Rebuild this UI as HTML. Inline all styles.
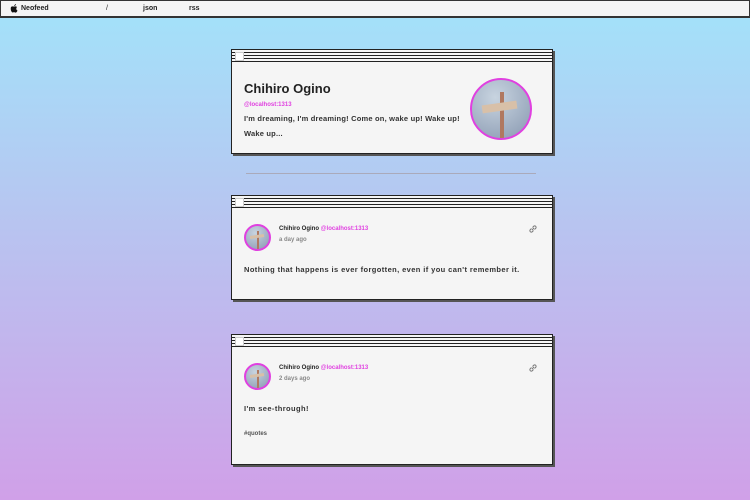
<!DOCTYPE html>
<html><head><style>
*{margin:0;padding:0;box-sizing:border-box}
body{width:750px;height:500px;overflow:hidden;background:linear-gradient(#a2e3fa 0%,#b8c4f0 45%,#d0a0e8 100%);font-family:"Liberation Sans",sans-serif;position:relative;color:#222}
.top{position:absolute;left:0;top:0;width:750px;height:18px;background:#f4f4f4;border:1px solid #333;border-bottom:2px solid #333;font-size:7px;font-weight:bold}
.top span{position:absolute;top:4px}
.card{position:absolute;left:231px;width:322px;background:#f5f5f5;border:1px solid #222;box-shadow:2px 2px 0 #555}
.bar{height:12px;border-bottom:1px solid #222;background:repeating-linear-gradient(#f5f5f5 0 2px,#222 2px 3px);position:relative}
.bar:after{content:"";position:absolute;left:3px;top:2px;width:7px;height:7px;background:#fff;border:1px solid #ccc}
.av{position:absolute;border-radius:50%;border:2px solid #e040e0;background:radial-gradient(circle at 40% 30%,#c8d4e0,#8898b0);overflow:hidden}
.av:before{content:"";position:absolute;left:48%;top:20%;width:8%;height:80%;background:#b07860}
.av:after{content:"";position:absolute;left:18%;top:40%;width:60%;height:13%;background:#d8c0a8;transform:rotate(-8deg)}
.mg{color:#e040e0}
.link{position:absolute;right:14px;top:28px;width:10px;height:10px}
.t{letter-spacing:.4px}
</style></head><body>
<div class="top"><svg style="position:absolute;left:9px;top:3px" width="8" height="9" viewBox="0 0 8 9"><path d="M4 2C5 0 6 0 6 0C6 1 5 2 4 2ZM1 3C2 2 3 2.5 4 2.5C5 2.5 6 2 7 3C6 4 6 6 7.5 6.5C7 8 6 9 5 8.5C4 8 4 8 3 8.5C2 9 0 6 1 3Z" fill="#111"/></svg><span style="left:20px">Neofeed</span><span style="left:105px;font-weight:normal">/</span><span style="left:142px">json</span><span style="left:188px">rss</span></div>

<div class="card" style="top:49px;height:105px">
<div class="bar"></div>
<div style="position:absolute;left:12px;top:31px;font-size:13px;font-weight:bold">Chihiro Ogino</div>
<div class="mg" style="position:absolute;left:12px;top:52px;font-size:6px;font-weight:bold">@localhost:1313</div>
<div style="position:absolute;left:12px;top:61px;font-size:7.5px;font-weight:bold;line-height:15px;width:222px;color:#333;letter-spacing:.2px">I'm dreaming, I'm dreaming! Come on, wake up! Wake up! Wake up...</div>
<div class="av" style="left:238px;top:28px;width:62px;height:62px"></div>
</div>

<div style="position:absolute;left:246px;top:173px;width:290px;height:1px;background:#aab"></div>

<div class="card" style="top:195px;height:105px">
<div class="bar"></div>
<div class="av" style="left:12px;top:28px;width:27px;height:27px"></div>
<div style="position:absolute;left:47px;top:30px;font-size:6px;font-weight:bold">Chihiro Ogino <span class="mg">@localhost:1313</span></div>
<div style="position:absolute;left:47px;top:41px;font-size:6px;color:#888;font-weight:bold">a day ago</div>
<svg class="link" viewBox="0 0 10 10"><path d="M4 6L6 4M3.5 4.5L2 6a1.5 1.5 0 0 0 2 2L5.5 6.5M4.5 3.5L6 2a1.5 1.5 0 0 1 2 2L6.5 5.5" stroke="#777" fill="none" stroke-width="1"/></svg>
<div class="t" style="position:absolute;left:12px;top:69px;font-size:7.5px;font-weight:bold;color:#333">Nothing that happens is ever forgotten, even if you can't remember it.</div>
</div>

<div class="card" style="top:334px;height:131px">
<div class="bar"></div>
<div class="av" style="left:12px;top:28px;width:27px;height:27px"></div>
<div style="position:absolute;left:47px;top:30px;font-size:6px;font-weight:bold">Chihiro Ogino <span class="mg">@localhost:1313</span></div>
<div style="position:absolute;left:47px;top:41px;font-size:6px;color:#888;font-weight:bold">2 days ago</div>
<svg class="link" viewBox="0 0 10 10"><path d="M4 6L6 4M3.5 4.5L2 6a1.5 1.5 0 0 0 2 2L5.5 6.5M4.5 3.5L6 2a1.5 1.5 0 0 1 2 2L6.5 5.5" stroke="#777" fill="none" stroke-width="1"/></svg>
<div class="t" style="position:absolute;left:12px;top:69px;font-size:7.5px;font-weight:bold;color:#333">I'm see-through!</div>
<div style="position:absolute;left:12px;top:96px;font-size:6px;font-weight:bold;color:#555">#quotes</div>
</div>
</body></html>
